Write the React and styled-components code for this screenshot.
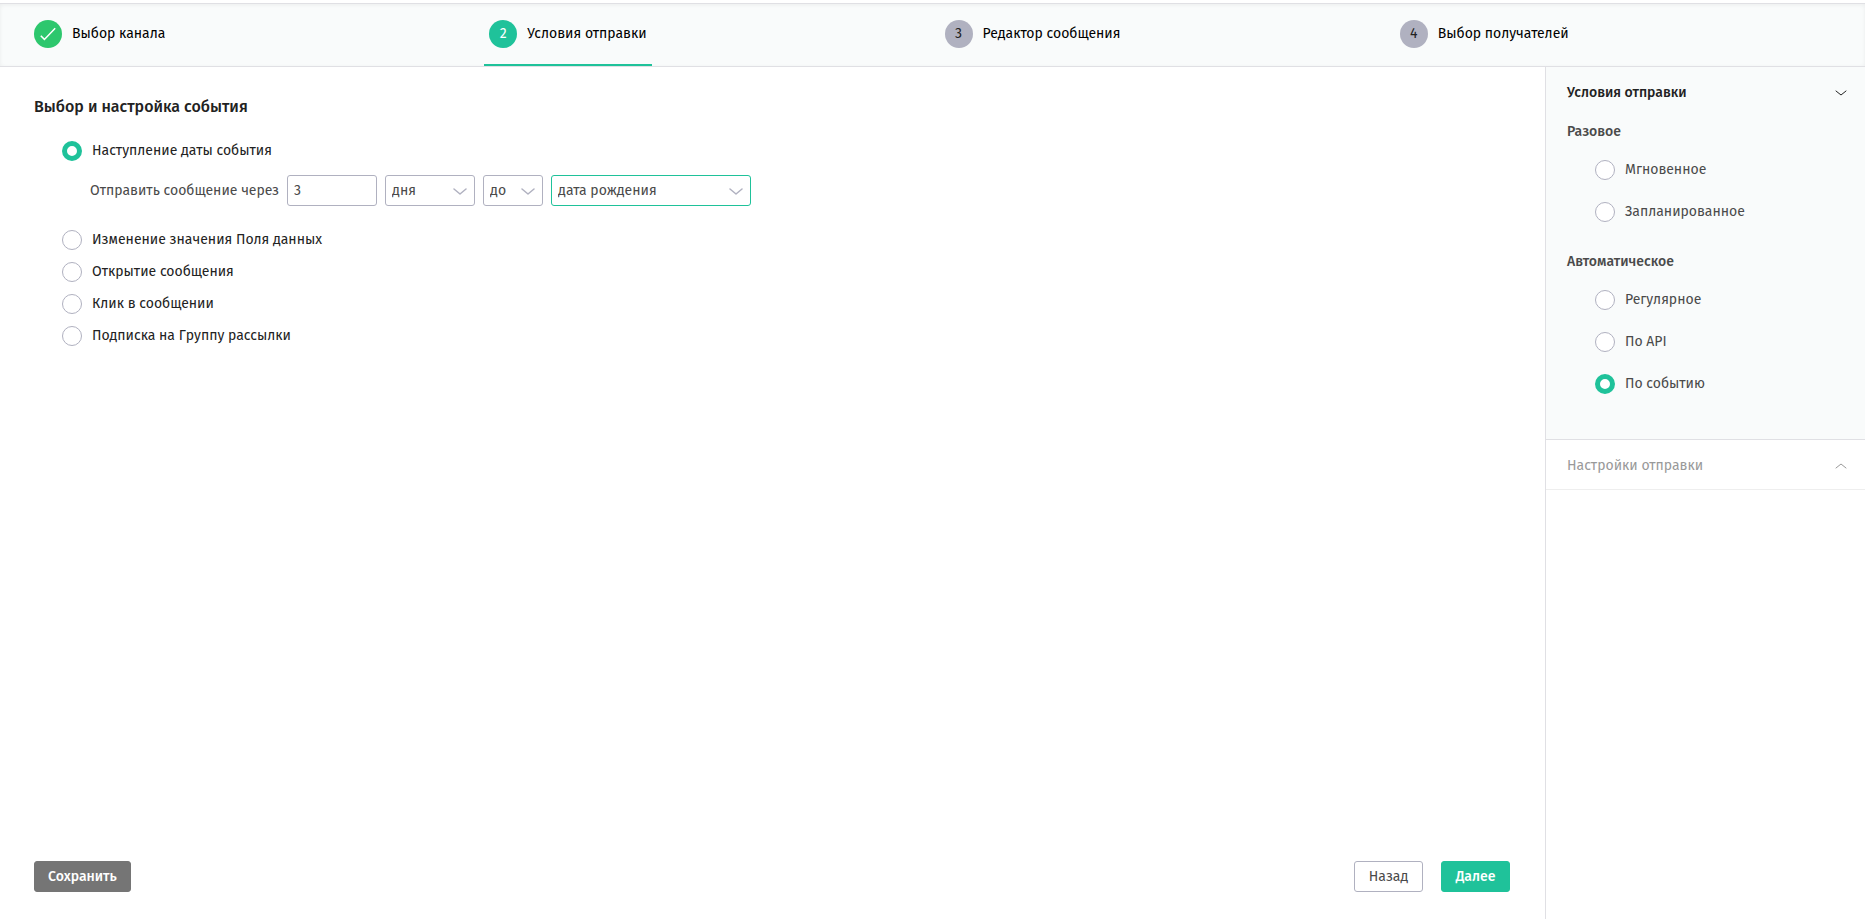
import React, { useState } from "react";
import styled, { createGlobalStyle } from "styled-components";

const color = {
  accent: "#1fc29a",
  done: "#2dc76d",
  muted: "#b0b1c0",
  line: "#e0e0e4",
  panel: "#f9fbfb",
  ink: "#222222",
  text: "#4a4a4a",
};

const GlobalStyle = createGlobalStyle`
  *, *::before, *::after { box-sizing: border-box; }
  body {
    margin: 0;
    background: #fff;
    color: ${color.ink};
    font: 14px/20px "Fira Sans", "Noto Sans", "Open Sans", sans-serif;
  }
  button, input, select { font: inherit; color: inherit; }
`;

const Page = styled.div`
  display: flex;
  flex-direction: column;
  min-height: 100vh;
  padding-top: 3px;
`;

const Steps = styled.nav`
  display: grid;
  grid-template-columns: repeat(4, 1fr);
  height: 64px;
  padding: 0 15px 0 29px;
  background: ${color.panel};
  border-top: 1px solid ${color.line};
  border-bottom: 1px solid ${color.line};
  box-shadow: inset 0 1px 4px rgba(0, 0, 0, 0.06);
`;

const Step = styled.button`
  display: flex;
  align-items: center;
  justify-self: start;
  gap: 10px;
  padding: 0 5px;
  color: #000;
  background: none;
  border: 0;
  border-bottom: 2px solid ${(p) => (p.$current ? color.accent : "transparent")};
  cursor: pointer;
`;

const stepFill = { done: color.done, current: color.accent, next: color.muted };

const StepMark = styled.span`
  display: grid;
  place-items: center;
  width: 28px;
  height: 28px;
  border-radius: 50%;
  color: ${(p) => (p.$state === "next" ? color.ink : "#fff")};
  background: ${(p) => stepFill[p.$state]};
`;

const Body = styled.div`
  display: flex;
  flex: 1;
`;

const Main = styled.main`
  display: flex;
  flex: 1;
  flex-direction: column;
  padding: 28px 35px 27px 34px;
`;

const Title = styled.h1`
  margin: 0 0 22px;
  font-size: 16px;
  font-weight: 500;
  line-height: 24px;
`;

const EventList = styled.div`
  display: flex;
  flex-direction: column;
  gap: 12px;
  padding-left: 28px;
`;

const RadioLabel = styled.label`
  display: flex;
  align-items: center;
  gap: 10px;
  height: 20px;
  cursor: pointer;
`;

const RadioInput = styled.input`
  appearance: none;
  flex: none;
  width: 20px;
  height: 20px;
  margin: 0;
  background: #fff;
  border: 1px solid ${color.muted};
  border-radius: 50%;
  cursor: pointer;

  &:checked { border: 5px solid ${color.accent}; }
`;

const Condition = styled.div`
  display: flex;
  align-items: center;
  gap: 8px;
  padding: 2px 0 12px 28px;
  color: ${color.text};
`;

const ConditionLabel = styled.label`
  white-space: nowrap;
`;

const NumberInput = styled.input`
  width: 90px;
  height: 31px;
  padding: 0 6px;
  background: #fff;
  border: 1px solid ${color.muted};
  border-radius: 3px;
  outline: 0;
`;

const SelectBox = styled.span`
  position: relative;
  width: ${(p) => p.$width}px;

  svg {
    position: absolute;
    top: 13px;
    right: 8px;
    pointer-events: none;
  }
`;

const SelectInput = styled.select`
  appearance: none;
  display: block;
  width: 100%;
  height: 31px;
  padding: 0 24px 0 6px;
  background: #fff;
  border: 1px solid ${(p) => (p.$active ? color.accent : color.muted)};
  border-radius: 3px;
  outline: 0;
`;

const Footer = styled.footer`
  display: flex;
  gap: 18px;
  margin-top: auto;
`;

const buttonLook = {
  save: `color: #fff; background: #757575; border-color: #757575; font-weight: 500; margin-right: auto;`,
  plain: `color: ${color.text}; background: #fff; border-color: ${color.muted};`,
  primary: `color: #fff; background: ${color.accent}; border-color: ${color.accent}; font-weight: 500;`,
};

const Button = styled.button`
  min-width: 69px;
  height: 31px;
  padding: 0 13px;
  border: 1px solid;
  border-radius: 3px;
  cursor: pointer;
  ${(p) => buttonLook[p.$kind]}
`;

const Sidebar = styled.aside`
  flex: none;
  width: 320px;
  border-left: 1px solid ${color.line};
`;

const Panel = styled.section`
  padding: 0 18px 0 21px;
  background: ${(p) => (p.$open ? color.panel : "#fff")};
  border-bottom: 1px solid ${(p) => (p.$open ? color.line : "#eeeeee")};
`;

const PanelToggle = styled.button`
  display: flex;
  align-items: center;
  justify-content: space-between;
  width: 100%;
  height: 49px;
  padding: 2px 0 0;
  color: ${(p) => (p.$open ? color.ink : "#999999")};
  font-weight: ${(p) => (p.$open ? 500 : 400)};
  background: none;
  border: 0;
  cursor: pointer;
`;

const PanelContent = styled.div`
  padding-bottom: 21px;
`;

const Group = styled.fieldset`
  margin: 0;
  padding: 0 0 24px;
  border: 0;
  color: ${color.text};
`;

const GroupTitle = styled.legend`
  padding: 6px 0 0;
  font-weight: 500;
`;

const GroupOptions = styled.div`
  display: flex;
  flex-direction: column;
  gap: 22px;
  padding: 18px 0 0 28px;
`;

function Radio({ name, label, checked, onChange }) {
  return (
    <RadioLabel>
      <RadioInput type="radio" name={name} checked={checked} onChange={onChange} />
      {label}
    </RadioLabel>
  );
}

function Chevron({ up, size = 14, stroke = "currentColor" }) {
  const h = size / 2;
  const d = up ? `M1 ${h - 1}L${h} 1L${size - 1} ${h - 1}` : `M1 1L${h} ${h - 1}L${size - 1} 1`;
  return (
    <svg width={size} height={h} fill="none" stroke={stroke} strokeLinecap="round" strokeLinejoin="round" strokeWidth={size > 12 ? 1.5 : 1} aria-hidden="true">
      <path d={d} />
    </svg>
  );
}

function Check() {
  return (
    <svg width="16" height="14" viewBox="0 0 16 14" fill="none" stroke="#fff" strokeWidth="1.5" aria-hidden="true">
      <path d="M0.8 8.8L4.4 12.4L15.2 1.2" />
    </svg>
  );
}

function Select({ label, options, width, active }) {
  return (
    <SelectBox $width={width}>
      <SelectInput aria-label={label} $active={active}>
        {options.map((o) => (
          <option key={o}>{o}</option>
        ))}
      </SelectInput>
      <Chevron stroke={color.muted} />
    </SelectBox>
  );
}

const steps = [
  { label: "Выбор канала", state: "done" },
  { label: "Условия отправки", state: "current" },
  { label: "Редактор сообщения", state: "next" },
  { label: "Выбор получателей", state: "next" },
];

const events = [
  "Наступление даты события",
  "Изменение значения Поля данных",
  "Открытие сообщения",
  "Клик в сообщении",
  "Подписка на Группу рассылки",
];

const groups = [
  { title: "Разовое", options: ["Мгновенное", "Запланированное"] },
  { title: "Автоматическое", options: ["Регулярное", "По API", "По событию"] },
];

export default function App() {
  const [event, setEvent] = useState(events[0]);
  const [mode, setMode] = useState("По событию");

  return (
    <>
      <GlobalStyle />
      <Page>
        <Steps>
          {steps.map((s, i) => (
            <Step key={s.label} type="button" $current={s.state === "current"}>
              <StepMark $state={s.state}>{s.state === "done" ? <Check /> : i + 1}</StepMark>
              {s.label}
            </Step>
          ))}
        </Steps>
        <Body>
          <Main>
            <Title>Выбор и настройка события</Title>
            <EventList>
              {events.map((label) => (
                <React.Fragment key={label}>
                  <Radio name="event" label={label} checked={event === label} onChange={() => setEvent(label)} />
                  {label === events[0] && (
                    <Condition>
                      <ConditionLabel htmlFor="delay">Отправить сообщение через</ConditionLabel>
                      <NumberInput id="delay" type="text" defaultValue="3" />
                      <Select label="Единица времени" options={["дня"]} width={90} />
                      <Select label="До или после" options={["до"]} width={60} />
                      <Select label="Дата" options={["дата рождения"]} width={200} active />
                    </Condition>
                  )}
                </React.Fragment>
              ))}
            </EventList>
            <Footer>
              <Button type="button" $kind="save">Сохранить</Button>
              <Button type="button" $kind="plain">Назад</Button>
              <Button type="button" $kind="primary">Далее</Button>
            </Footer>
          </Main>
          <Sidebar>
            <Panel $open>
              <PanelToggle type="button" $open>
                Условия отправки
                <Chevron size={12} />
              </PanelToggle>
              <PanelContent>
                {groups.map((g) => (
                  <Group key={g.title}>
                    <GroupTitle>{g.title}</GroupTitle>
                    <GroupOptions>
                      {g.options.map((o) => (
                        <Radio key={o} name="mode" label={o} checked={mode === o} onChange={() => setMode(o)} />
                      ))}
                    </GroupOptions>
                  </Group>
                ))}
              </PanelContent>
            </Panel>
            <Panel>
              <PanelToggle type="button">
                Настройки отправки
                <Chevron size={12} up />
              </PanelToggle>
            </Panel>
          </Sidebar>
        </Body>
      </Page>
    </>
  );
}
